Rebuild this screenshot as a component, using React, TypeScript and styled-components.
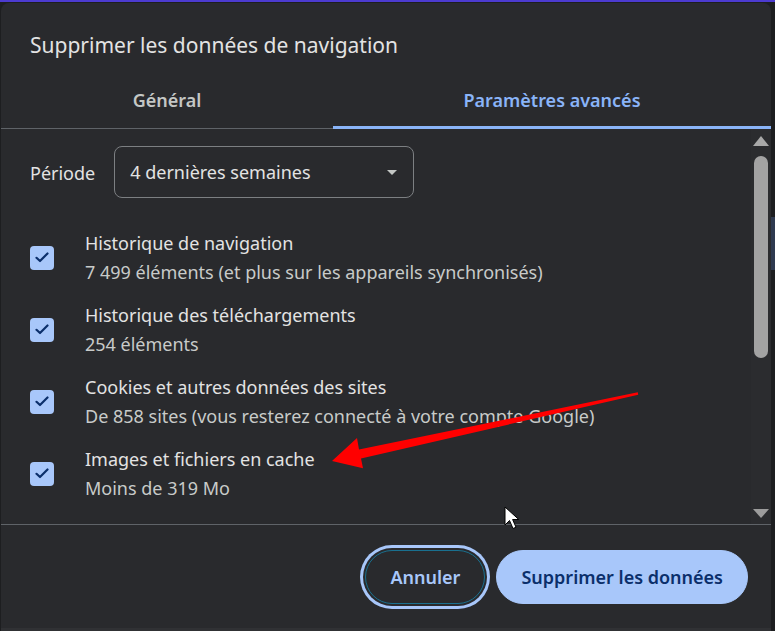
import React from 'react';
import styled, { createGlobalStyle } from 'styled-components';

const GlobalStyle = createGlobalStyle`
  html, body {
    margin: 0;
    padding: 0;
    background: #1d1e20;
  }
  body {
    font-family: "Noto Sans", "Open Sans", sans-serif;
    overflow: hidden;
  }
`

const Page = styled.div`
  position: relative;
  width: 775px;
  height: 631px;
  overflow: hidden;
  background: #1d1e20;
  display: flex;
  flex-direction: column;
`

const TopStripe = styled.div`
  height: 2px;
  margin-bottom: 1px;
  background: #4c3bd0;
  flex-shrink: 0;
`

const Stage = styled.div`
  flex: 1;
  min-height: 0;
  display: flex;
  padding-left: 1px;
`

const Dialog = styled.div`
  width: 770px;
  background: #292a2d;
  border-radius: 8px 8px 0 0;
  display: flex;
  flex-direction: column;
  color: #e3e3e3;
`

const SideStrip = styled.div`
  flex: 1;
  padding-top: 214px;
`

const SideBlock = styled.div`
  height: 53px;
  background: #2f3a50;
`

const Title = styled.h1`
  margin: 0;
  padding: 28px 29px 0;
  font-size: 21px;
  font-weight: 400;
  line-height: 28px;
`

const TabBar = styled.div`
  display: grid;
  grid-template-columns: 332px 1fr;
  border-bottom: 1px solid #5f6368;
`

const Tab = styled.div<{ $active?: boolean }>`
  position: relative;
  padding: 29px 0 16px;
  text-align: center;
  font-size: 18px;
  font-weight: 600;
  line-height: 24px;
  color: ${p => (p.$active ? '#8ab4f8' : '#c4c7c5')};

  &::after {
    content: '';
    display: ${p => (p.$active ? 'block' : 'none')};
    position: absolute;
    left: 0;
    right: 0;
    bottom: -1px;
    height: 3px;
    background: #8ab4f8;
  }
`

const Body = styled.div`
  height: 395px;
  display: flex;
  overflow: hidden;
`

const Scroller = styled.div`
  flex: 1;
  padding: 17px 0 0 29px;
`

const PeriodRow = styled.div`
  display: flex;
  align-items: center;
  gap: 19px;
  font-size: 18px;
  line-height: 26px;
  padding-top: 1px;
`

const Select = styled.div`
  box-sizing: border-box;
  width: 300px;
  height: 52px;
  margin-top: -1px;
  padding: 0 16px 0 15px;
  border: 1px solid #7c7f82;
  border-radius: 8px;
  display: flex;
  align-items: center;
  justify-content: space-between;
  font-size: 18px;
`

const Caret = styled.span`
  width: 0;
  height: 0;
  border-left: 5px solid transparent;
  border-right: 5px solid transparent;
  border-top: 5px solid #c4c7c5;
`

const List = styled.div`
  margin-top: 23px;
`

const Item = styled.div`
  display: flex;
  align-items: center;
  gap: 31px;
  padding: 8px 0 6px;
`

const Check = styled.div`
  width: 24px;
  height: 24px;
  margin-top: -1px;
  border-radius: 4px;
  background: #a8c7fa;
  display: flex;
  align-items: center;
  justify-content: center;
  flex-shrink: 0;
`

const ItemText = styled.div`
  font-size: 18px;
  line-height: 29px;
  white-space: nowrap;
`

const ItemTitle = styled.div`
  color: #e3e3e3;
`

const ItemSub = styled.div`
  color: #c8cbc9;
`

const Track = styled.div`
  width: 20px;
  padding: 7px 0 6px;
  background: #2b2c2f;
  display: flex;
  flex-direction: column;
  align-items: center;
`

const Arrow = styled.span<{ $down?: boolean }>`
  width: 0;
  height: 0;
  border-left: 8px solid transparent;
  border-right: 8px solid transparent;
  ${p => (p.$down ? 'border-top: 9px solid #9c9c9c;' : 'border-bottom: 10px solid #a8a8a8;')}
`

const Thumb = styled.div`
  width: 14px;
  height: 202px;
  margin-top: 10px;
  border-radius: 7px;
  background: #a3a3a3;
`

const Spacer = styled.div`
  flex: 1;
`

const Footer = styled.div`
  flex: 1;
  border-top: 1px solid #5f6368;
  border-bottom: 3px solid #303134;
  display: flex;
  justify-content: flex-end;
  align-items: flex-start;
  gap: 11px;
  padding: 25px 23px 0 0;
`

const Button = styled.button<{ $primary?: boolean }>`
  height: 54px;
  padding: 0 24px;
  border-radius: 27px;
  font-family: "Noto Sans", "Open Sans", sans-serif;
  font-size: 18px;
  font-weight: 600;
  cursor: pointer;
  border: 1px solid ${p => (p.$primary ? '#a8c7fa' : '#19708f')};
  background: ${p => (p.$primary ? '#a8c7fa' : '#292a2d')};
  color: ${p => (p.$primary ? '#0b2f6b' : '#a8c7fa')};
  box-shadow: ${p => (p.$primary ? 'none' : '0 0 0 2px #292a2d, 0 0 0 5px #a8c7fa')};
`

const Overlay = styled.svg`
  position: absolute;
  left: 0;
  top: 0;
  pointer-events: none;
`

const items = [
  { title: 'Historique de navigation', sub: '7 499 éléments (et plus sur les appareils synchronisés)' },
  { title: 'Historique des téléchargements', sub: '254 éléments' },
  { title: 'Cookies et autres données des sites', sub: 'De 858 sites (vous resterez connecté à votre compte Google)' },
  { title: 'Images et fichiers en cache', sub: 'Moins de 319 Mo' },
  { title: 'Mots de passe et autres données de connexion', sub: 'Aucun' },
]

function CheckMark() {
  return (
    <svg width="14" height="11" viewBox="0 0 14 11">
      <path d="M1.5 5.8 L5 9 L12.5 1.5" fill="none" stroke="#0b2f6b" strokeWidth="2.2" strokeLinecap="round" strokeLinejoin="round" />
    </svg>
  )
}

export default function App() {
  return (
    <Page>
      <GlobalStyle />
      <TopStripe />
      <Stage>
        <Dialog>
          <Title>Supprimer les données de navigation</Title>
          <TabBar>
            <Tab>Général</Tab>
            <Tab $active>Paramètres avancés</Tab>
          </TabBar>
          <Body>
            <Scroller>
              <PeriodRow>
                Période
                <Select>
                  4 dernières semaines
                  <Caret />
                </Select>
              </PeriodRow>
              <List>
                {items.map(it => (
                  <Item key={it.title}>
                    <Check><CheckMark /></Check>
                    <ItemText>
                      <ItemTitle>{it.title}</ItemTitle>
                      <ItemSub>{it.sub}</ItemSub>
                    </ItemText>
                  </Item>
                ))}
              </List>
            </Scroller>
            <Track>
              <Arrow />
              <Thumb />
              <Spacer />
              <Arrow $down />
            </Track>
          </Body>
          <Footer>
            <Button>Annuler</Button>
            <Button $primary>Supprimer les données</Button>
          </Footer>
        </Dialog>
        <SideStrip>
          <SideBlock />
        </SideStrip>
      </Stage>
      <Overlay width="775" height="631" viewBox="0 0 775 631">
        <polygon
          points="637.8,392.3 359,449.6 357,438 332,461 363,468.3 361,458.4 638.2,394.7"
          fill="#ff0000"
        />
        <path
          d="M505 507 L505 525 L509.5 520.5 L513 528.5 L516 527.2 L512.6 519.5 L518.8 519.5 Z"
          fill="#ffffff"
          stroke="#000000"
          strokeWidth="1"
          strokeLinejoin="round"
        />
      </Overlay>
    </Page>
  )
}
